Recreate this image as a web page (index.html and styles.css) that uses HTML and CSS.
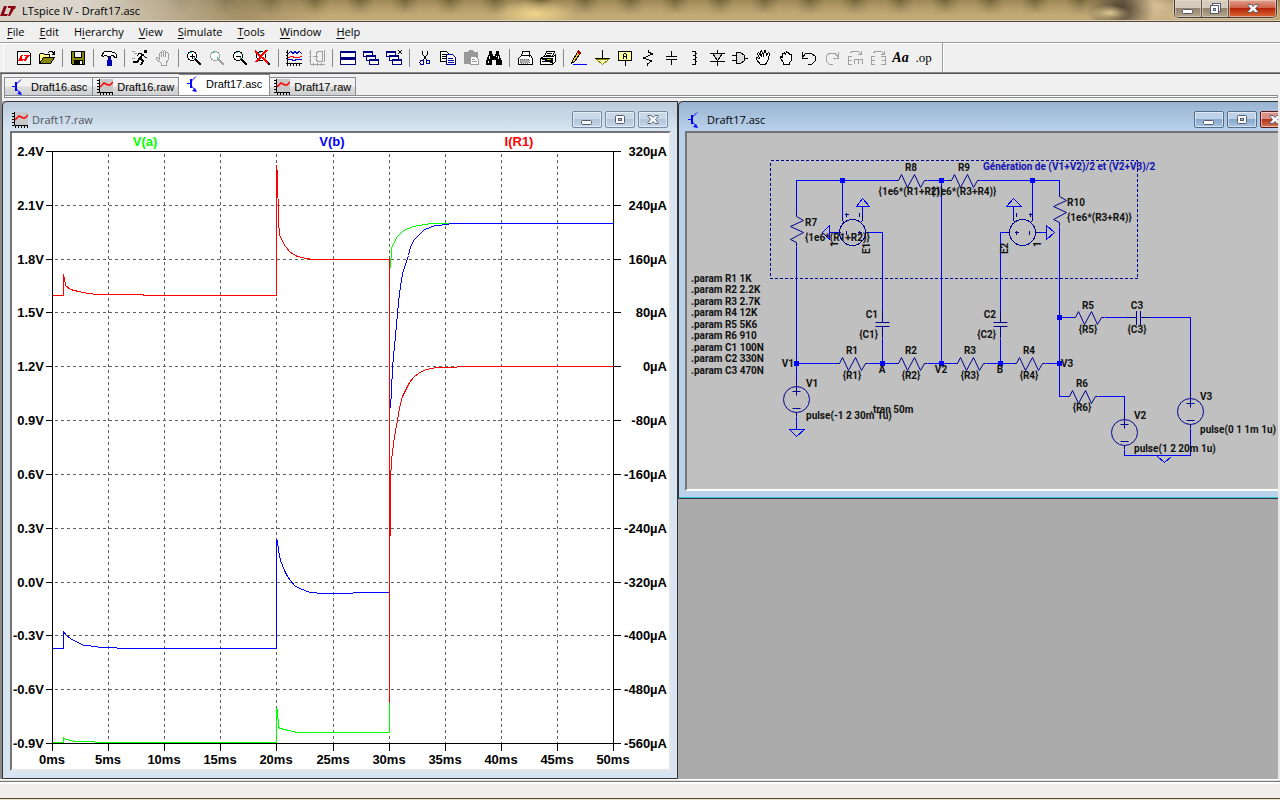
FILE: index.html
```html
<!DOCTYPE html>
<html lang="en">
<head>
<meta charset="utf-8">
<title>LTspice IV - Draft17.asc</title>
<link rel="stylesheet" href="styles.css">
</head>
<body>
<svg class="defs" aria-hidden="true">
  <defs>
    <symbol id="scope" viewBox="0 0 16 16"><path fill="#c8c8c8" d="M2 0h14v13H2z"/><path fill="none" stroke="#000" d="M2.500 0v13.500H16M0 1.500h2M0 4.500h2M0 7.500h2M0 10.500h2M0 13.500h2M3.500 14v2M6.500 14v2M9.500 14v2M12.500 14v2M15.500 14v2"/><path stroke="#f00" stroke-width="1.500" fill="none" d="M3 8l4-4 4 2h2l3-3"/></symbol>
    <symbol id="npn" viewBox="0 0 16 16"><path stroke="#00f" stroke-width="2" d="M5 3v9"/><path stroke="#00f" fill="none" d="M1 7.500h4M5 5.500l5-5M5 9.500l5 5.500"/><path fill="#00f" d="M11 16l-5-1 3-3z"/></symbol>
    <symbol id="glass" viewBox="0 0 16 16"><circle cx="6" cy="6" r="4.500" fill="#fff" stroke="currentColor"/><path stroke="currentColor" stroke-width="2" d="M10 10l5 5"/><path class="glint" d="M4 3l2-1M8 9l1-2"/></symbol>
    <symbol id="min" viewBox="0 0 12 12"><rect x=".5" y="6.500" width="10" height="4" rx="1" fill="#fff" stroke="#555b70"/></symbol>
    <symbol id="max" viewBox="0 0 12 12"><rect x="1.500" y="1.500" width="9" height="8" rx="1" fill="#fff" stroke="#555b70"/><rect x="4.500" y="4.500" width="3" height="2" fill="#a8bed8" stroke="#555b70"/></symbol>
    <symbol id="close" viewBox="0 0 12 12"><path d="M1 1.500h3l2 2 2-2h3v1L8.500 5.500 11 8.500v1H8l-2-2-2 2H1v-1l2.500-3L1 2.500z" fill="#fff" stroke="#555b70"/></symbol>
    <symbol id="res" overflow="visible"><path d="M-16 0h3l3-6 6 13 7-13 6 13 4-7h3"/></symbol>
    <symbol id="vres" overflow="visible"><path d="M0-17v4l7 4-13 6 13 6-13 7 6 3v4"/></symbol>
    <symbol id="src" overflow="visible"><circle r="13"/><path d="M0-19v15M-4-8h8M-4 9h8M0 13v4"/></symbol>
    <symbol id="cap" overflow="visible"><path d="M0-14V-2M-7-2H7M-7 2H7M0 2V14"/></symbol>
  </defs>
</svg>

<header class="titlebar">
  <svg class="logo" viewBox="0 0 16 16"><path fill="#8c0010" d="M4 3h3L4 11h4l-1 2H0z"/><path fill="#8c0010" d="M8 3h8l-1 3h-1l-4 7H8l3-8H8z"/></svg>
  <span class="apptitle">LTspice IV - Draft17.asc</span>
  <div class="appbuttons">
    <button aria-label="Minimize"><svg><use href="#min"/></svg></button>
    <button aria-label="Restore"><svg viewBox="0 0 12 12"><rect x="3.500" y=".5" width="8" height="8" fill="#fff" stroke="#555b70"/><rect x="1.500" y="2.500" width="8" height="8" fill="#fff" stroke="#555b70"/><rect x="4.500" y="5.500" width="2" height="2" stroke="#555b70" fill="none"/></svg></button>
    <button class="appclose" aria-label="Close"><svg><use href="#close"/></svg></button>
  </div>
</header>

<nav class="menu">
  <a href="#"><u>F</u>ile</a><a href="#"><u>E</u>dit</a><a href="#">H<u>i</u>erarchy</a><a href="#"><u>V</u>iew</a><a href="#"><u>S</u>imulate</a><a href="#"><u>T</u>ools</a><a href="#"><u>W</u>indow</a><a href="#"><u>H</u>elp</a>
</nav>

<div class="toolbar" role="toolbar">
  <div class="tools">
  <button aria-label="New schematic"><svg viewBox="0 0 16 16"><path fill="#fff" stroke="#000" d="M1.500 1.500h11l2 2v11h-13z"/><path fill="#f00" d="M5 5h2L5.500 9H8l-1 2H2zM8 5h6l-1 2h-1l-2 4H7.500L10 6H8z"/></svg></button>
  <button aria-label="Open"><svg viewBox="0 0 16 16"><path fill="#ff8" stroke="#000" d="M.5 13.500v-9l1-1h3l1 1h5v3"/><path fill="#880" stroke="#000" d="M.5 13.500l4-6h11l-4 6z"/><path stroke="#000" fill="none" d="M9 2.500l2-1h2l2 2M15.500 1v3h-3"/></svg></button>
  <span class="sep"></span>
  <button aria-label="Save"><svg viewBox="0 0 16 16"><path fill="#880" stroke="#000" d="M1.500 1.500h13v13h-12l-1-1z"/><path fill="#f0f0f0" stroke="#000" d="M4.500 1.500h7v6h-7z"/><path d="M4 10h9v5H4z"/><path fill="#fff" d="M10 11h2v3h-2z"/></svg></button>
  <span class="sep"></span>
  <button aria-label="Control panel"><svg viewBox="0 0 16 16"><path fill="#fff" stroke="#000" d="M.5 5.500l3-4h7l1 1h2l2 2v3h-2l-1-2h-2l-1 1h-3l-1-1h-2l-1 1z"/><path fill="#00c" stroke="#009" d="M7.500 7.500h2v3h1v5h-4v-5h1z"/></svg></button>
  <span class="sep"></span>
  <button aria-label="Run"><svg viewBox="0 0 16 16"><path d="M12 0h3v3h-3z"/><path stroke="#000" stroke-width="2" fill="none" d="M11 4L8 8l3 3-2 4M8 8l-3 4H1"/><path stroke="#000" fill="none" d="M11 5l2 2h2M10 3.500H7L5 6"/><path stroke="#999" d="M0 1.500h3M2 3.500h3M0 8.500h3"/></svg></button>
  <button aria-label="Halt"><svg class="off" viewBox="0 0 16 16"><path d="M4.500 9V3.500l1-1 1 1V7 1.500l1-1 1 1V7 1.500l1-1 1 1V7l.5-4 1-1 1 1V10l-2 3v2.500h-5V13L1.500 9.500v-2h1z"/></svg></button>
  <span class="sep"></span>
  <button aria-label="Zoom in"><svg><use href="#glass"/><path stroke="#000" d="M4 6.500h5M6.500 4v5"/></svg></button>
  <button aria-label="Pan"><svg class="dim"><use href="#glass"/></svg></button>
  <button aria-label="Zoom out"><svg><use href="#glass"/><path stroke="#000" d="M4 6.500h5"/></svg></button>
  <button aria-label="Zoom full"><svg><use href="#glass"/><path stroke="#f00" stroke-width="2" d="M0 1l13 12M12 0L1 12"/></svg></button>
  <span class="sep"></span>
  <button aria-label="Plot settings"><svg viewBox="0 0 16 16"><path stroke="#000" d="M1.500 0v16M0 13.500h16M0 2.500h2M0 5.500h2M0 8.500h2M4.500 13v3M7.500 13v3M10.500 13v3M13.500 13v3"/><path stroke="#00c" fill="none" d="M2 4l3-3 2 3 2-3 2 3 2-3 3 3M2 9.500h4v1h3v-1h3h4"/><path stroke="#f00" fill="none" d="M2 7.500l4-1 3 1h3l4-1"/></svg></button>
  <button aria-label="Autorange"><svg class="off" viewBox="0 0 16 16"><path d="M1.500 0v14.500H16M0 2.500h2M0 6.500h2M0 10.500h2M4.500 13v3M8.500 13v3M12.500 13v3M4 6.500h5M7 3.500l2-2h4v10H9l-2-2v-6M15.500 0v12"/></svg></button>
  <span class="sep"></span>
  <button aria-label="Tile windows"><svg class="navy" viewBox="0 0 16 16"><path fill="#fff" d="M.5 1.500h15v6H.5zM.5 8.500h15v6H.5z"/><path stroke-width="2" d="M0 2h16M0 9h16"/></svg></button>
  <button aria-label="Cascade windows"><svg class="navy" viewBox="0 0 16 16"><path fill="#fff" d="M.5 1.500h9v5h-9zM3.500 5.500h9v5h-9zM6.500 9.500h9v5h-9z"/><path stroke-width="2" d="M0 2h10M3 6h10M6 10h10"/></svg></button>
  <button aria-label="Close all windows"><svg class="navy" viewBox="0 0 16 16"><path fill="#fff" d="M.5 1.500h9v5h-9zM3.500 5.500h9v5h-9zM6.500 9.500h9v5h-9z"/><path stroke-width="2" d="M0 2h10M3 6h10M6 10h10"/><path stroke="#000" d="M12 0l4 4M16 0l-4 4"/></svg></button>
  <span class="sep"></span>
  <button aria-label="Cut"><svg viewBox="0 0 16 16"><path stroke="#000" fill="none" d="M5.500 1v3l4 6M10.500 1v3l-4 6"/><g fill="none" stroke="#009"><circle cx="5" cy="12.500" r="2"/><circle cx="11" cy="12" r="2"/></g></svg></button>
  <button aria-label="Copy"><svg viewBox="0 0 16 16"><path fill="#fff" stroke="#000" d="M.5 1.500h6l2 2v8h-8z"/><path stroke="#000" d="M2 4.500h4M2 6.500h4M2 8.500h4"/><path fill="#fff" stroke="#009" d="M6.500 4.500h6l3 3v7h-9z"/><path stroke="#009" d="M8 8.500h5M8 10.500h6M8 12.500h6"/></svg></button>
  <button aria-label="Paste"><svg viewBox="0 0 16 16"><path fill="#999" d="M1 2h4l1-2h4l1 2h4v12H1z"/><path fill="#fff" stroke="#999" d="M7.500 6.500h5l3 3v5h-8z"/><path stroke="#999" d="M9 9.500h3M9 11.500h5"/></svg></button>
  <button aria-label="Find"><svg viewBox="0 0 16 16"><path d="M3 1h3v3h1v2h2V4h1V1h3v3l3 7v4h-6v-5H6v5H0v-4l3-7z"/><path stroke="#fff" d="M3.500 6v3M12.500 6v3M2.500 11v2M10.500 6v1"/></svg></button>
  <span class="sep"></span>
  <button aria-label="Print setup"><svg viewBox="0 0 16 16"><path fill="#fff" stroke="#000" d="M4.500 6.500l1-5h7v5M1.500 8.500l3-3h9l2 3v6h-14z"/><path fill="#aaa" stroke="#777" stroke-dasharray="1 1" d="M3 9h9v4H3z"/></svg></button>
  <button aria-label="Print"><svg viewBox="0 0 16 16"><path fill="#fff" stroke="#000" d="M4.500 6.500l2-5h8l-2 5M.5 8.500l3-2h10l2-2v7l-3 3H.5z"/><path stroke="#000" d="M7 3.500h5M6 5.500h5M0 8.500h12v5M2 11.500h9"/><path stroke="#cc0" d="M7 9.500h4"/></svg></button>
  <span class="sep"></span>
  <button aria-label="Wire"><svg viewBox="0 0 16 16"><path fill="#fd0" stroke="#000" d="M1.500 10.500l5-8 2 2-5 7-3 2z"/><path fill="#c00" stroke="#900" d="M6.500 2.500l1-2 2 2-1 2z"/><path stroke="#00f" d="M2 14.500h14"/></svg></button>
  <button aria-label="Ground"><svg viewBox="0 0 16 16"><path stroke="#000" d="M8.500 0v9M1 8.500h15"/><path fill="#ffb" stroke="#880" d="M2.500 9.500h12l-6 5z"/></svg></button>
  <button aria-label="Label net"><svg viewBox="0 0 16 16"><path fill="#ff9" stroke="#000" d="M1.500 1.500h13v9h-13z"/><path stroke="#000" d="M8.500 11v5"/><path stroke="#000" fill="none" d="M6.500 9V4.500l1-1h1l1 1V9M6.500 6.500h3"/></svg></button>
  <button aria-label="Resistor"><svg class="ink" viewBox="0 0 16 16"><path d="M8.500 0v2l4 2-9 4 8 3-4 3v2"/></svg></button>
  <button aria-label="Capacitor"><svg class="ink" viewBox="0 0 16 16"><path d="M8.500 1v6M3 6.500h11M3 9.500h11M8.500 10v5"/></svg></button>
  <button aria-label="Inductor"><svg class="ink" viewBox="0 0 16 16"><path d="M6 1.500h3l1 2-1 2H7h2l1 2-1 2H7h2l1 2-1 3H6"/></svg></button>
  <button aria-label="Diode"><svg class="ink" viewBox="0 0 16 16"><path fill="#ddd" d="M3.500 3.500l5 7 5-7z"/><path d="M8.500 0v3M1 3.500h15M1 11.500h15M8.500 11v5"/></svg></button>
  <button aria-label="Component"><svg class="ink" viewBox="0 0 16 16"><path fill="#ddd" d="M4.500 2.500h4l4 3v5l-4 3h-4z"/><path d="M0 5.500h4M0 10.500h4M13 8.500h3"/></svg></button>
  <button aria-label="Move"><svg class="hand" viewBox="0 0 16 16"><path d="M5.500 14.500l-4-5v-2l3 1-2-5 1-1 3 4-1-5 1-1 2 5 1-5h1l1 5 2-3 1 1-1 6-3 5z"/></svg></button>
  <button aria-label="Drag"><svg class="hand" viewBox="0 0 16 16"><path d="M5.500 14.500v-2l-3-4v-2l2 1V4l2-1 1 1 1-2 2 1 1 1 2 1v5l-2 3v2z"/></svg></button>
  <button aria-label="Undo"><svg class="ink" viewBox="0 0 16 16"><path d="M2 7l3-4h5l4 3v5l-3 3H7M1.500 2v6H7"/></svg></button>
  <button aria-label="Redo"><svg class="off" viewBox="0 0 16 16"><path d="M14 7l-3-4H6L2 6v5l3 3h4M14.500 2v6H9"/></svg></button>
  <button aria-label="Rotate"><svg class="off" viewBox="0 0 16 16"><path d="M3 3l3-2h5l3 3M14.500 1v3H11"/><path d="M5 6.500H1.500v8H5M1 10.500h3.500M7 9.500h9M7.500 9v5M11.500 9v5M15.500 9v5"/></svg></button>
  <button aria-label="Mirror"><svg class="off" viewBox="0 0 16 16"><path d="M3 3l3-2h5l3 3M14.500 1v3H11"/><path d="M5 6.500H1.500v8H5M1 10.500h3.500M11 6.500h4v8h-4M15 10.500h-3"/></svg></button>
  <button class="aa" aria-label="Text">Aa</button>
  <button class="op" aria-label="SPICE directive">.op</button>
  </div>
</div>

<div class="tabstrip">
  <div class="tabs" role="tablist">
    <button role="tab" class="tab"><svg><use href="#npn"/></svg>Draft16.asc</button>
    <button role="tab" class="tab"><svg><use href="#scope"/></svg>Draft16.raw</button>
    <button role="tab" class="tab on" aria-selected="true"><svg><use href="#npn"/></svg>Draft17.asc</button>
    <button role="tab" class="tab"><svg><use href="#scope"/></svg>Draft17.raw</button>
  </div>
  <div class="rail"></div>
</div>

<main class="mdi">
  <section class="win plotwin">
    <header class="wintitle"><svg><use href="#scope"/></svg><span>Draft17.raw</span>
      <div class="winbuttons"><button aria-label="Minimize"><svg><use href="#min"/></svg></button><button aria-label="Maximize"><svg><use href="#max"/></svg></button><button aria-label="Close"><svg><use href="#close"/></svg></button></div>
    </header>
    <div class="client">
      <svg class="plot" viewBox="12 133 657 636">
        <g class="crisp" transform="translate(.5 .5)">
          <path class="grid" d="M108 153V743M164 153V743M220 153V743M276 153V743M333 153V743M389 153V743M445 153V743M501 153V743M557 153V743M54 205H613M54 259H613M54 312H613M54 366H613M54 420H613M54 474H613M54 528H613M54 582H613M54 635H613M54 689H613"/>
          <path class="axis" d="M45 151H620M45 743H620M52 151V750M613 151V750M45 205h7M45 259h7M45 312h7M45 366h7M45 420h7M45 474h7M45 528h7M45 582h7M45 635h7M45 689h7M613 205h7M613 259h7M613 312h7M613 366h7M613 420h7M613 474h7M613 528h7M613 582h7M613 635h7M613 689h7M108 743v7M164 743v7M220 743v7M276 743v7M333 743v7M389 743v7M445 743v7M501 743v7M557 743v7"/>
          <path class="va" d="M52 742H63V737L65 739 72 740 73 741H94L95 742H276V708L277 710 278 727 280 728 288 730 297 732H389V267H390L391 248 394 241 397 236 403 230 413 226 430 223H449"/>
          <path class="vb" d="M52 648H63V631L66 635 70 638 75 641 84 645 97 646 98 647H116L117 648H276V539L277 541 278 550 280 560 284 570 287 576 290 580 294 585 299 588 310 592 323 593H352L353 592H389V407H390L391 390 392 367 395 335 397 313 399 293 402 273 405 264 408 255 410 247 413 240 418 235 424 229 435 225 448 224 449 223H613"/>
          <path class="ir" d="M52 295H63V274L64 278 65 285 70 289 78 291 88 293 97 294H143V295H276V165L277 174 278 221 279 234 281 239 285 246 290 252 297 256 306 258 312 259H389V702M390 535V480L391 460 393 443 395 430 397 420 399 407 402 396 406 388 409 382 413 377 419 372 426 369 436 367H456L457 366H613"/>
        </g>
        <g class="legend"><text class="ta" x="145" y="146">V(a)</text><text class="tb" x="332" y="146">V(b)</text><text class="ti" x="519" y="146">I(R1)</text></g>
        <g class="left"><text x="44" y="156">2.4V</text><text x="44" y="210">2.1V</text><text x="44" y="264">1.8V</text><text x="44" y="317">1.5V</text><text x="44" y="371">1.2V</text><text x="44" y="425">0.9V</text><text x="44" y="479">0.6V</text><text x="44" y="533">0.3V</text><text x="44" y="587">0.0V</text><text x="44" y="640">-0.3V</text><text x="44" y="694">-0.6V</text><text x="44" y="748">-0.9V</text></g>
        <g class="left"><text x="667" y="156">320µA</text><text x="667" y="210">240µA</text><text x="667" y="264">160µA</text><text x="667" y="317">80µA</text><text x="667" y="371">0µA</text><text x="667" y="425">-80µA</text><text x="667" y="479">-160µA</text><text x="667" y="533">-240µA</text><text x="667" y="587">-320µA</text><text x="667" y="640">-400µA</text><text x="667" y="694">-480µA</text><text x="667" y="748">-560µA</text></g>
        <g class="legend"><text x="52" y="764">0ms</text><text x="108" y="764">5ms</text><text x="164" y="764">10ms</text><text x="220" y="764">15ms</text><text x="276" y="764">20ms</text><text x="333" y="764">25ms</text><text x="389" y="764">30ms</text><text x="445" y="764">35ms</text><text x="501" y="764">40ms</text><text x="557" y="764">45ms</text><text x="613" y="764">50ms</text></g>
      </svg>
    </div>
  </section>

  <div class="cell">
  <section class="win ascwin">
    <header class="wintitle"><svg><use href="#npn"/></svg><span>Draft17.asc</span>
      <div class="winbuttons"><button aria-label="Minimize"><svg><use href="#min"/></svg></button><button aria-label="Maximize"><svg><use href="#max"/></svg></button><button class="red" aria-label="Close"><svg><use href="#close"/></svg></button></div>
    </header>
    <div class="client">
      <svg class="schem" viewBox="687 133 604 356">
        <g transform="translate(.5 .5)">
          <rect class="dash" x="770" y="160" width="367" height="118"/>
          <path class="wire" d="M796 212V180H895M927 180H948M980 180H1059V192M842 180V220M865 232H882V310M796 246V380M882 338V363M941 180V363M1000 338V363M1008 232H1000V310M1032 180V220M1059 226V396H1066M796 363H836M868 363H895M927 363H954M986 363H1013M1045 363H1059M1059 317H1072M1104 317H1126M1150 317H1190V392M1098 396H1124V413M1124 449V455H1190V428M796 416V429M862 206V216M1013 206V216M829 232H836M1038 232H1046"/>
          <path class="wire" d="M856 206H869L862 198ZM1006 206H1021L1013 198ZM829 225V239L822 232ZM1046 225V239L1054 232ZM789 429H804L796 436ZM1157 456L1164 462 1171 456"/>
          <g class="sym">
            <use href="#res" x="911" y="180"/><use href="#res" x="964" y="180"/>
            <use href="#res" x="852" y="363"/><use href="#res" x="911" y="363"/><use href="#res" x="970" y="363"/><use href="#res" x="1029" y="363"/>
            <use href="#res" x="1088" y="317"/><use href="#res" x="1082" y="396"/>
            <use href="#vres" x="796" y="229"/><use href="#vres" x="1059" y="209"/>
            <use href="#src" x="796" y="399"/><use href="#src" x="1124" y="432"/><use href="#src" x="1190" y="411"/>
            <use href="#cap" x="882" y="324"/><use href="#cap" x="1000" y="324"/>
            <path d="M1126 317h10M1136 310v14M1140 310v14M1140 317h10"/>
            <circle cx="852" cy="232" r="13"/><circle cx="1022" cy="232" r="13"/>
            <path d="M842 216v4l2 2M862 214v6l-2 2M836 232h4M865 232h4M844 214h4M846 212v4M859 212v4M846 230v4M857 232h4M859 230v4M1013 214v6l2 2M1032 216v4l-2 2M1005 232h4M1035 232h4M1016 212v4M1028 214h4M1030 212v4M1014 232h4M1016 230v4M1029 230v4"/>
          </g>
          <path class="node" d="M842 180h0M941 180h0M1032 180h0M796 363h0M882 363h0M941 363h0M1000 363h0M1059 363h0M1059 317h0"/>
        </g>
        <text class="note" x="983" y="170">Génération de (V1+V2)/2 et (V2+V3)/2</text>
        <g><text x="691" y="282">.param R1 1K</text><text x="691" y="293">.param R2 2.2K</text><text x="691" y="305">.param R3 2.7K</text><text x="691" y="316">.param R4 12K</text><text x="691" y="328">.param R5 5K6</text><text x="691" y="339">.param R6 910</text><text x="691" y="351">.param C1 100N</text><text x="691" y="362">.param C2 330N</text><text x="691" y="374">.param C3 470N</text>
        <text x="805" y="226">R7</text><text x="805" y="241">{1e6*(R1+R2)}</text><text x="1067" y="206">R10</text><text x="1067" y="221">{1e6*(R3+R4)}</text>
        <text x="1061" y="367">V3</text><text x="806" y="387">V1</text><text x="806" y="419">pulse(-1 2 30m 1u)</text><text x="870" y="413">.tran 50m</text><text x="1134" y="419">V2</text><text x="1134" y="452">pulse(1 2 20m 1u)</text><text x="1200" y="400">V3</text><text x="1200" y="433">pulse(0 1 1m 1u)</text>
        <text transform="translate(838 247) rotate(-90)">1</text><text transform="translate(870 254) rotate(-90)">E1</text><text transform="translate(1008 254) rotate(-90)">E2</text><text transform="translate(1041 247) rotate(-90)">1</text></g>
        <g class="mid"><text x="911" y="171">R8</text><text x="964" y="171">R9</text><text x="911" y="195">{1e6*(R1+R2)}</text><text x="964" y="195">{1e6*(R3+R4)}</text>
        <text x="852" y="354">R1</text><text x="911" y="354">R2</text><text x="970" y="354">R3</text><text x="1029" y="354">R4</text><text x="852" y="379">{R1}</text><text x="911" y="379">{R2}</text><text x="970" y="379">{R3}</text><text x="1029" y="379">{R4}</text>
        <text x="1088" y="309">R5</text><text x="1088" y="333">{R5}</text><text x="1137" y="309">C3</text><text x="1137" y="333">{C3}</text><text x="1082" y="387">R6</text><text x="1082" y="411">{R6}</text>
        <text x="882" y="373">A</text><text x="941" y="373">V2</text><text x="1000" y="373">B</text></g>
        <g class="end"><text x="878" y="318">C1</text><text x="878" y="338">{C1}</text><text x="996" y="318">C2</text><text x="996" y="338">{C2}</text><text x="794" y="367">V1</text></g>
      </svg>
    </div>
  </section>
  </div>
</main>
<footer class="status"></footer>
<div class="taskbar"></div>
</body>
</html>
```
FILE: styles.css
```css
* { box-sizing: border-box; }
body { margin: 0; height: 100vh; display: flex; flex-direction: column; overflow: hidden; background: #f0f0f0; color: #000; font: 11px/16px "Open Sans", "Noto Sans", sans-serif; }
button { margin: 0; padding: 0; border: 0; background: none; font: inherit; color: inherit; }
a { color: inherit; text-decoration: none; }
.defs { position: absolute; width: 0; height: 0; }

.titlebar { flex: none; height: 22px; display: flex; align-items: center; border-bottom: 1px solid #55442f; box-shadow: inset 0 -1px #d9d0c0; overflow: hidden;
  background:
    linear-gradient(90deg, #d6d0c6 0, #dcd6cc 80px, #c4b8a2dd 150px, #8b7a5a88 240px, transparent 330px),
    radial-gradient(ellipse 40px 14px at 535px 14px, #f0d48a, transparent),
    radial-gradient(ellipse 20px 8px at 1110px 13px, #dcc890, transparent),
    radial-gradient(ellipse 34px 26px at 1120px 10px, #44382a, transparent),
    radial-gradient(ellipse 60px 20px at 1155px 6px, #d8c09a, transparent),
    linear-gradient(transparent, #c2aa76 75%),
    repeating-linear-gradient(90deg, #5c512baa 0, transparent 14px, transparent 31px, #5c512baa 45px),
    linear-gradient(#9a8654, #b39c6c); }
.logo { width: 16px; height: 16px; flex: none; }
.apptitle { margin-left: 6px; }
.appbuttons { margin-left: auto; margin-right: 3px; align-self: flex-start; display: flex; height: 18px; border: 1px solid #433c38; border-top: 0; border-radius: 0 0 5px 5px; overflow: hidden; box-shadow: 0 0 0 1px #e4dccf88; }
.appbuttons button { width: 27px; border-right: 1px solid #5a5148; background: linear-gradient(#d5cabb 45%, #93836f 50%, #b6a78e); box-shadow: inset 0 0 0 1px #eae2d688; }
.appbuttons .appclose { width: 47px; border: 0; background: linear-gradient(#e2a18f, #cf6248 45%, #b42409 50%, #dc6a33); }
.appbuttons svg, .winbuttons svg { width: 12px; height: 12px; display: block; margin: auto; }

.menu { flex: none; height: 20px; display: flex; gap: 15px; padding: 2px 7px; }
.menu u { text-underline-offset: 2px; }

.toolbar { flex: none; height: 31px; border-top: 1px solid #a0a0a0; box-shadow: inset 0 1px #fff; border-bottom: 1px solid #888; padding-left: 3px; }
.tools { display: flex; align-items: center; width: 940px; height: 29px; padding-left: 8px; border-left: 1px solid #fff; border-right: 1px solid #a0a0a0; box-shadow: 1px 0 #fff; }
.tools button { flex: none; width: 23px; height: 23px; display: grid; place-items: center; }
.tools svg { width: 16px; height: 16px; display: block; shape-rendering: crispEdges; }
.sep { flex: none; width: 1px; height: 18px; margin: 0 3px 0 4px; background: #888; }
.glint { stroke: #0cc; }
.off { fill: none; stroke: #a0a0a0; }
.dim { color: #a0a0a0; }
.navy { stroke: #000080; }
.ink { fill: none; stroke: #000; }
.hand { fill: #fff; stroke: #000; }
.tools .aa { font: italic bold 14px "Liberation Serif", serif; }
.tools .op { font: 13px "Liberation Serif", serif; }

.tabstrip { flex: none; height: 28px; border-top: 1px solid #555; border-left: 2px solid #888; padding: 0 2px; }
.tabs { display: flex; align-items: flex-end; height: 21px; }
.tab { display: flex; align-items: center; gap: 4px; height: 18px; padding: 0 5px 0 6px; font: 11px/16px "Liberation Sans", sans-serif; border: 1px solid #898c95; border-bottom: 0; background: linear-gradient(#f2f2f2 45%, #dcdcdc 55%, #d0d0d0); }
.tab + .tab { border-left: 0; padding: 0 4px; }
.tab + .tab.on { height: 21px; background: #fff; padding: 0 7px 2px; }
.tab svg { width: 16px; height: 16px; flex: none; }
.rail { height: 3px; border: 1px solid #898c95; background: #fff; }

.mdi { flex: 1; min-height: 0; display: grid; grid-template-columns: 676fr 600fr; background: #ababab; border-left: 2px solid #8a8a8a; border-right: 2px solid #e8e8e8; overflow: hidden; }
.win { display: flex; flex-direction: column; border: 1px solid #333; padding: 0 6px 7px; min-width: 0; min-height: 0; }
.plotwin { background: linear-gradient(#bccbda, #d7e4f1 28px); border-radius: 5px 0 0 0; padding-left: 7px; }
.cell { min-width: 0; overflow: hidden; }
.ascwin { margin-right: -22px; background: linear-gradient(#98b3d1, #b9d1ea 28px); box-shadow: inset 0 -1px #35c4de; border-radius: 5px 0 0 0; }
.wintitle { flex: none; height: 29px; display: flex; align-items: center; padding: 6px 0 0 2px; gap: 4px; }
.wintitle > svg { width: 16px; height: 16px; }
.plotwin .wintitle { color: #4c535c; }
.winbuttons { margin-left: auto; display: flex; gap: 3px; padding-right: 3px; }
.winbuttons button { width: 30px; height: 17px; border: 1px solid #7688a3; border-radius: 2px; box-shadow: inset 0 0 0 1px #ffffff88; background: linear-gradient(#c9d8e7 45%, #b2c5d9 50%, #c6d7e8); }
.ascwin .winbuttons button { border-color: #536d8e; background: linear-gradient(#bdd2e8 45%, #88a8ca 50%, #a8c5e1); }
.ascwin .winbuttons .red { border-color: #5a1717; background: linear-gradient(#dd8e85 45%, #b4321e 50%, #d07750); }
.client { flex: 1; min-height: 0; border: 2px solid #e6e6e6; border-top-color: #747474; border-left-color: #747474; background: #fff; overflow: hidden; }
.ascwin .client { background: #c0c0c0; border-bottom-color: #fff; }
.plot { display: block; width: 100%; height: 100%; }
.schem { display: block; width: 100%; height: auto; }
.crisp, .schem path, .schem rect, .schem circle { shape-rendering: crispEdges; }
.crisp path { fill: none; stroke-width: 1; }
.grid { stroke: #606060; stroke-dasharray: 3 3; }
.axis { stroke: #000; }
.va { stroke: #0f0; }
.vb { stroke: #00f; }
.ir { stroke: #f00; }
.plot text { font: bold 13px "Liberation Sans", Arial, sans-serif; }
.legend { text-anchor: middle; }
.left { text-anchor: end; }
.ta { fill: #0f0; }
.tb { fill: #00f; }
.ti { fill: #f00; }
.schem text { font: bold 10px Roboto, "Liberation Sans", sans-serif; fill: #111; }
.schem .note { fill: #1212b4; }
.wire { fill: none; stroke: #00f; }
.sym { fill: none; stroke: #000090; }
.dash { fill: none; stroke: #000090; stroke-dasharray: 3 2; }
.node { stroke: #00f; stroke-width: 5; stroke-linecap: square; }
.schem .node { stroke-width: 5; }
.mid { text-anchor: middle; }
.end { text-anchor: end; }

.status { flex: none; height: 19px; background: #f0edeb; border-top: 1px solid #fff; box-shadow: inset 0 1px #e0e0e0, inset 0 2px #777, inset 0 4px #fff; }
.taskbar { flex: none; height: 2px; border-top: 1px solid #574a3b; background: #eedfcb; }
```
